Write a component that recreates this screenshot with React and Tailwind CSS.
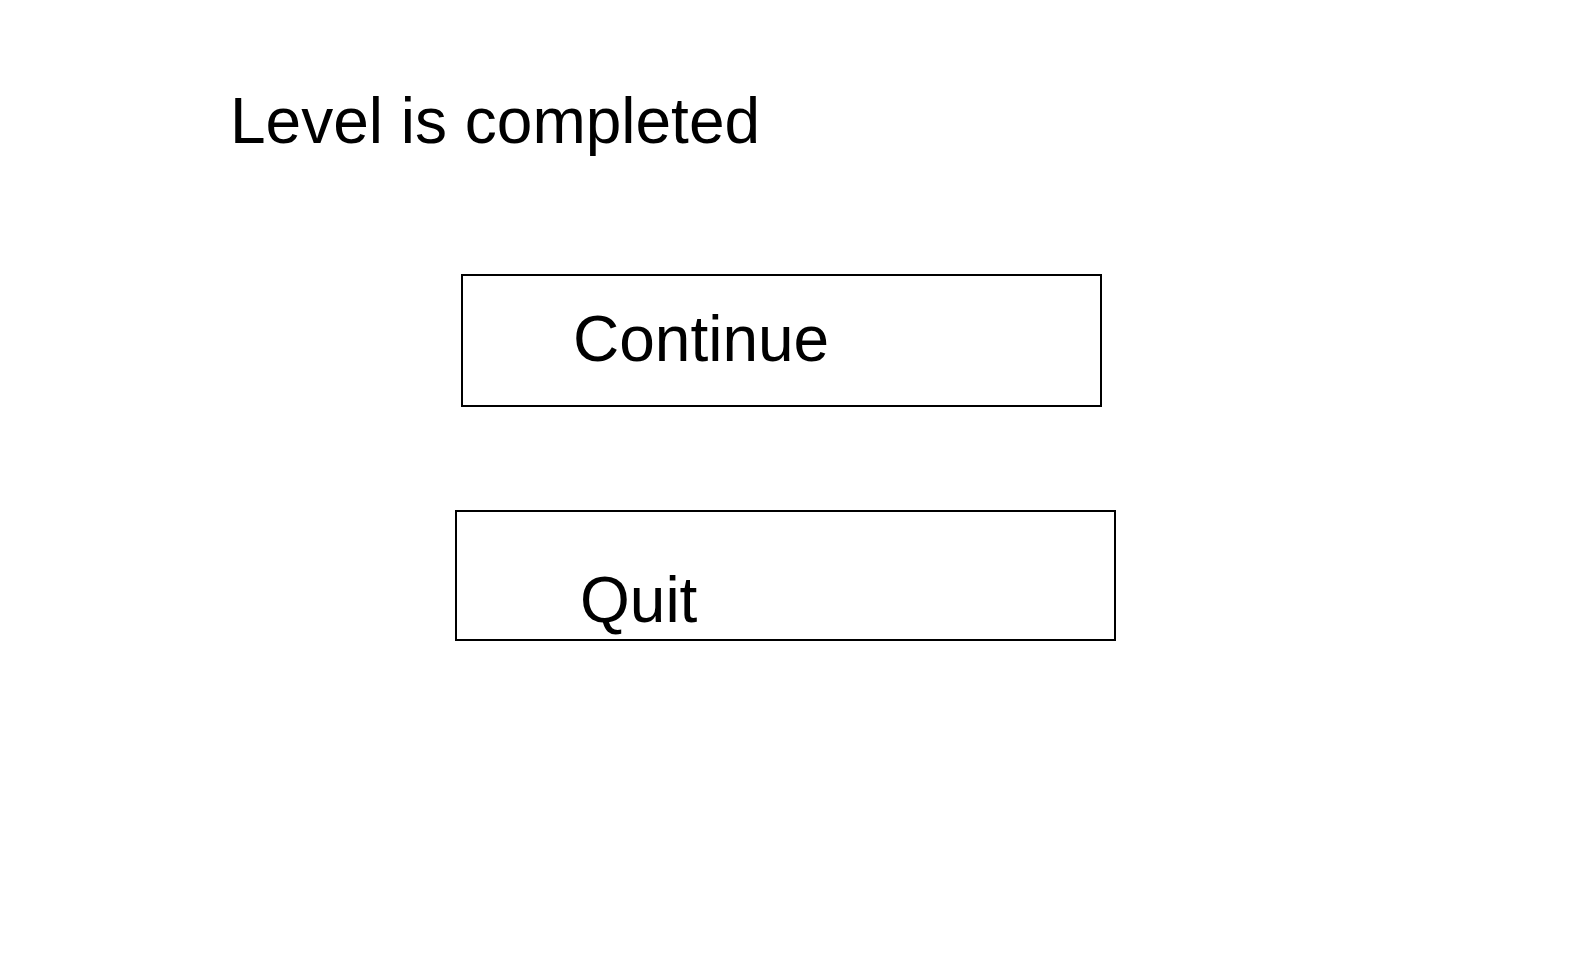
import React from 'react';

const LevelComplete = () => {
  return (
    <div className="min-h-screen w-full bg-white text-black font-['Liberation_Sans',Arial,sans-serif]">
      <div className="flex flex-col items-start pt-[89px]">
        <h1 className="ml-[230px] text-[64px] leading-none font-normal">Level is completed</h1>

        <button className="mt-[121px] ml-[461px] w-[641px] h-[133px] border-2 border-black text-left pl-[110px] pt-[31px] flex items-start">
          <span className="text-[64px] leading-none">Continue</span>
        </button>

        <button className="mt-[103px] ml-[455px] w-[661px] h-[131px] border-2 border-black text-left pl-[123px] pt-[56px] flex items-start">
          <span className="text-[64px] leading-none">Quit</span>
        </button>
      </div>
    </div>
  );
};

export default function App() {
  return <LevelComplete />;
}
